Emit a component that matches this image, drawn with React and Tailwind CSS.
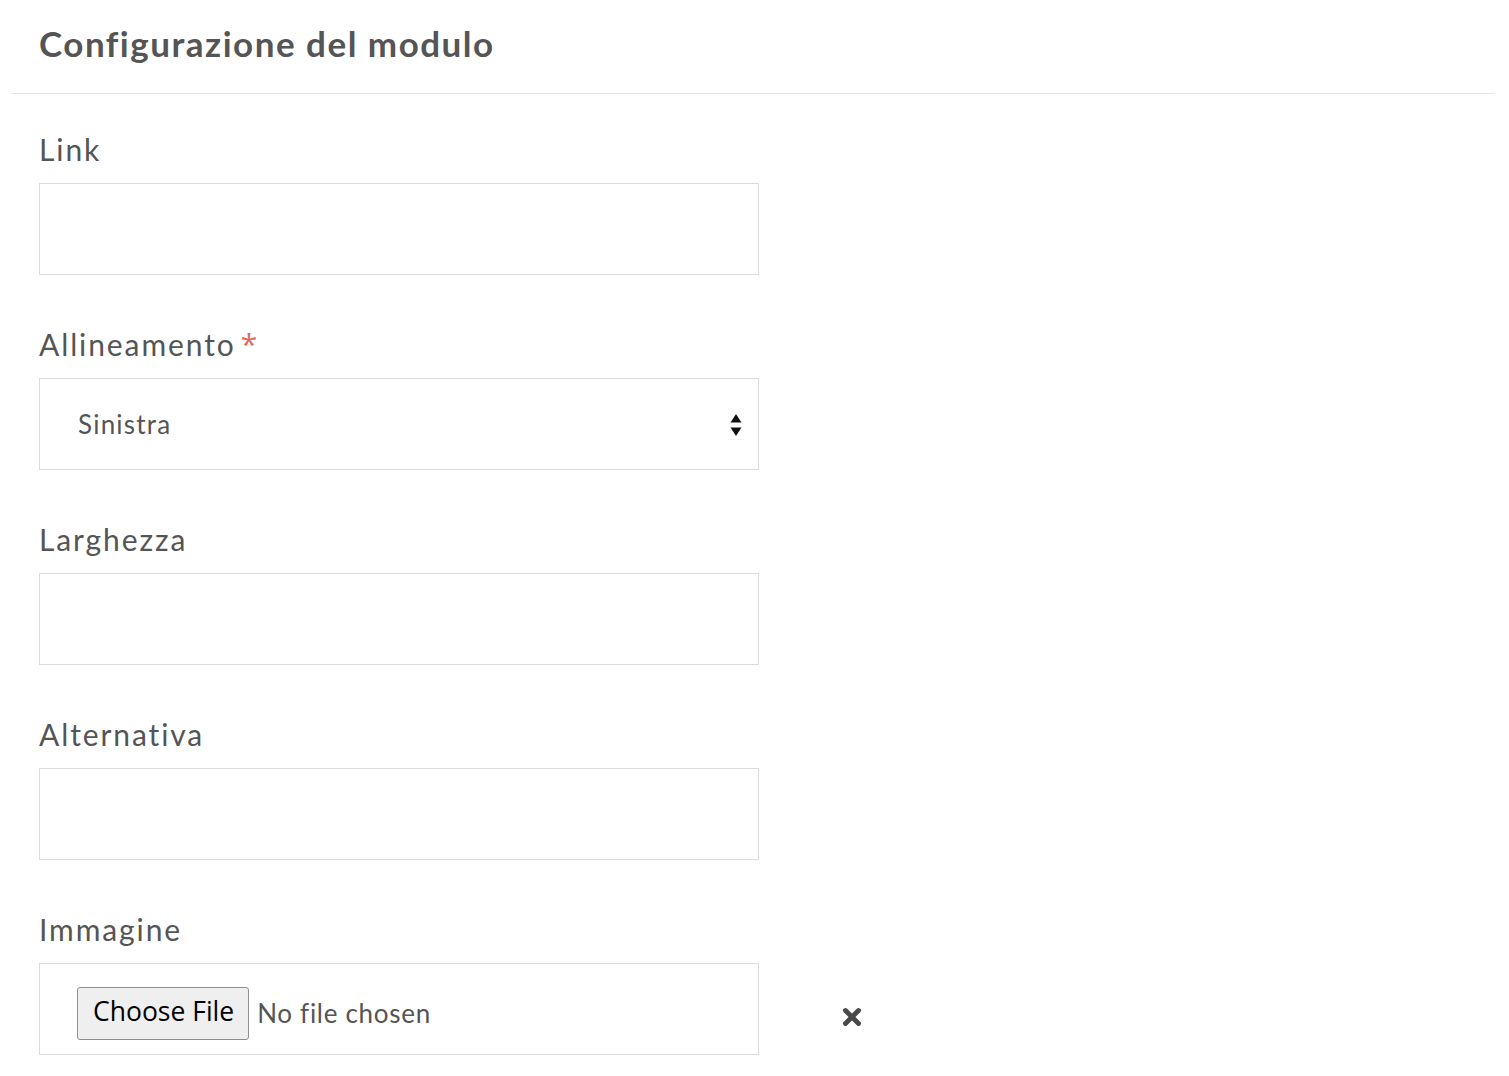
import { X } from 'lucide-react'

const font = { fontFamily: 'Lato, "Noto Sans", sans-serif' }

function Field({ label, required, children, first }) {
    return (
        <div className={first ? 'mt-[38px]' : 'mt-[52px]'}>
            <label className="flex items-start h-[36px] mb-[15px] text-[30px] leading-[34px] text-[#555] tracking-[1.9px]">
                {label}
                {required && <span className="ml-[5px] text-[30px] leading-[34px] tracking-normal text-[#e0685b]" style={{ fontFamily: '"Open Sans", sans-serif' }}>*</span>}
            </label>
            {children}
        </div>
    )
}

function TextBox() {
    return <input type="text" className="block w-[720px] h-[92px] border border-[#dcdcdc] bg-white px-[38px] text-[26px] text-[#555] outline-none" />
}

export default function App() {
    return (
        <div className="min-h-screen bg-white pl-[12px] pr-[14px]" style={font}>
            {/* Titolo */}
            <div className="h-[94px] border-b border-[#e5e5e5] pl-[27px] pt-[21px]">
                <h2 className="text-[35px] leading-[44px] font-bold text-[#555] tracking-[1.5px]">Configurazione del modulo</h2>
            </div>

            <div className="pl-[27px]">
                <Field label="Link" first>
                    <TextBox />
                </Field>

                <Field label="Allineamento" required>
                    <div className="relative w-[720px] h-[92px] border border-[#dcdcdc] bg-white flex items-center pl-[38px]">
                        <span className="text-[26px] text-[#555] tracking-[1.2px]">Sinistra</span>
                        <svg width="12" height="24" viewBox="0 0 12 24" className="absolute right-[16px] top-[34px]">
                            <polygon points="6,1 11.5,9.5 0.5,9.5" fill="#111" />
                            <polygon points="0.5,14.5 11.5,14.5 6,23" fill="#111" />
                        </svg>
                    </div>
                </Field>

                <Field label="Larghezza">
                    <TextBox />
                </Field>

                <Field label="Alternativa">
                    <TextBox />
                </Field>

                <Field label="Immagine">
                    <div className="flex items-center">
                        <div className="w-[720px] h-[92px] border border-[#dcdcdc] bg-white flex items-center pl-[37px] pt-[8px]">
                            <span
                                className="h-[53px] pl-[15px] pr-[14px] pb-[2px] flex items-center border border-[#8f8f8f] rounded-[3px] bg-[#efefef] text-[26.5px] text-black"
                                style={{ fontFamily: '"Open Sans", "Noto Sans", sans-serif' }}
                            >
                                Choose File
                            </span>
                            <span className="ml-[8px] text-[26px] text-[#555] tracking-[0.7px]">No file chosen</span>
                        </div>
                        <button className="ml-[80px] mt-[16px] text-[#4a4a4a]">
                            <X size={26} strokeWidth={4.5} />
                        </button>
                    </div>
                </Field>
            </div>
        </div>
    )
}
